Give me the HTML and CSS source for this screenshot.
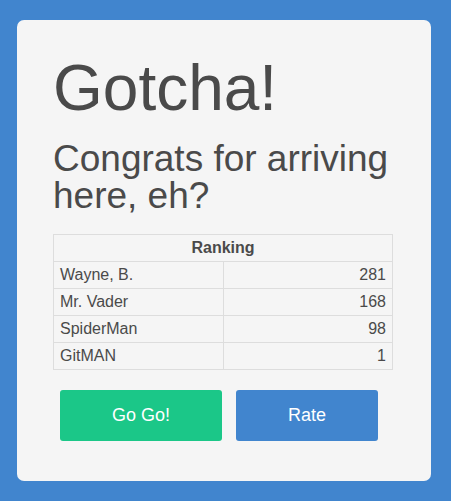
FILE: index.html
```html
<!DOCTYPE html>
<html>
<head>
<meta charset="utf-8">
<link rel="stylesheet" href="styles.css">
</head>
<body>
<div class="card">
  <h1 class="title">Gotcha!</h1>
  <h2 class="subtitle">Congrats for arriving here, eh?</h2>
  <table class="ranking">
    <thead>
      <tr><th colspan="2">Ranking</th></tr>
    </thead>
    <tbody>
      <tr><td>Wayne, B.</td><td class="num">281</td></tr>
      <tr><td>Mr. Vader</td><td class="num">168</td></tr>
      <tr><td>SpiderMan</td><td class="num">98</td></tr>
      <tr><td>GitMAN</td><td class="num">1</td></tr>
    </tbody>
  </table>
  <div class="actions">
    <button class="btn btn-go">Go Go!</button>
    <button class="btn btn-rate">Rate</button>
  </div>
</div>
</body>
</html>
```

FILE: styles.css
```css
html, body {
  margin: 0;
  padding: 0;
}
body {
  background: #4185ce;
  font-family: "Liberation Sans", Arial, sans-serif;
  color: #4a4a4a;
  padding: 20px 20px 20px 17px;
  height: 501px;
  box-sizing: border-box;
}
.card {
  background: #f5f5f5;
  border-radius: 7px;
  width: 414px;
  height: 461px;
  box-sizing: border-box;
  padding: 32px 38px 0 36px;
}
.title {
  margin: 0;
  font-size: 64px;
  line-height: 72px;
  font-weight: normal;
}
.subtitle {
  margin: 16px 0 0;
  font-size: 37px;
  line-height: 37px;
  font-weight: normal;
}
.ranking {
  margin-top: 20px;
  width: 340px;
  border-collapse: collapse;
  font-size: 16px;
  color: #4a4a4a;
}
.ranking th, .ranking td {
  border: 1px solid #dddddd;
  height: 27px;
  padding: 0 6px;
  box-sizing: border-box;
  line-height: 18px;
}
.ranking th {
  font-weight: bold;
  text-align: center;
}
.ranking td {
  width: 50%;
  text-align: left;
}
.ranking td.num {
  text-align: right;
}
.actions {
  display: flex;
  gap: 14px;
  margin-top: 20px;
  padding-left: 7px;
}
.btn {
  border: none;
  border-radius: 3px;
  height: 51px;
  color: #ffffff;
  font-family: "Liberation Sans", Arial, sans-serif;
  font-size: 18px;
  padding: 0;
  cursor: pointer;
}
.btn-go {
  width: 162px;
  background: #1bc788;
}
.btn-rate {
  width: 142px;
  background: #4185ce;
}
```
